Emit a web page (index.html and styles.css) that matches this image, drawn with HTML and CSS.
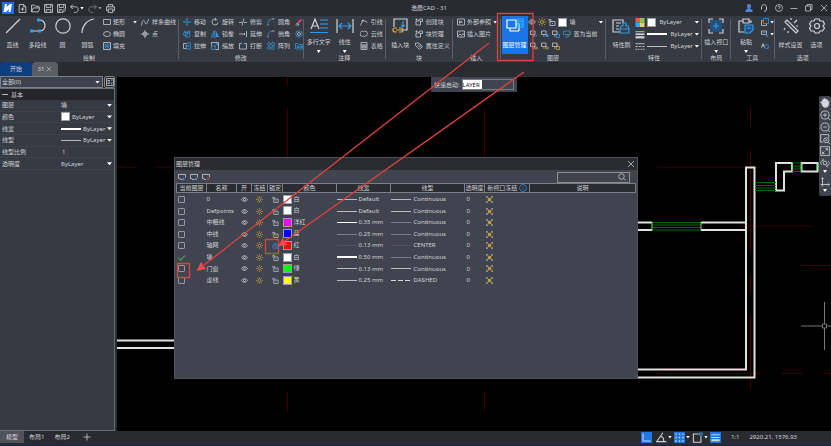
FILE: index.html
```html
<!DOCTYPE html>
<html lang="zh-CN">
<head>
<meta charset="utf-8">
<title>浩辰CAD - 31</title>
<link rel="stylesheet" href="styles.css">
</head>
<body>
<svg class="defs" aria-hidden="true">
  <symbol id="new" viewBox="0 0 16 16"><path d="M2 1h8l4 4v10H2zM10 1v4h4M5 9h6M8 6v6"/></symbol>
  <symbol id="open" viewBox="0 0 16 16"><path d="M1 14V2h5l2 2h6v3M1 14l3-7h12l-3 7z"/></symbol>
  <symbol id="save" viewBox="0 0 16 16"><path d="M1 1h14v14H1zM4 1v5h8V1M4 15v-5h8v5"/></symbol>
  <symbol id="saveas" viewBox="0 0 16 16"><path d="M8 15H1V1h14v7M4 1v5h8V1M4 15v-5h5M9 15l1-3 4-4 2 2-4 4z"/></symbol>
  <symbol id="undo" viewBox="0 0 16 16"><path d="M5 1L1 5l4 4M1 5h9c6 0 6 9 0 10H7"/></symbol>
  <symbol id="redo" viewBox="0 0 16 16"><path d="M11 1l4 4-4 4M15 5H6c-6 0-6 9 0 10h3"/></symbol>
  <symbol id="print" viewBox="0 0 16 16"><path d="M4 5V1h8v4M4 12H1V5h14v7h-3M4 9h8v6H4z"/></symbol>
  <symbol id="line" viewBox="0 0 16 16"><path d="M1 15L15 1"/></symbol>
  <symbol id="pline" viewBox="0 0 16 16"><path d="M8 2c9-1 9 11 2 11H1"/><path class="fb" d="M0 11.500h3v3H0zM8 11.500h3v3H8zM7 .5h3v3H7z"/></symbol>
  <symbol id="circle" viewBox="0 0 16 16"><circle cx="8" cy="8" r="7.200"/></symbol>
  <symbol id="arc" viewBox="0 0 16 16"><path d="M2 15C2 8 7 2 14 1"/></symbol>
  <symbol id="rect" viewBox="0 0 16 16"><path d="M1 3h14v10H1z"/></symbol>
  <symbol id="ellipse" viewBox="0 0 16 16"><ellipse cx="8" cy="8" rx="7" ry="5"/></symbol>
  <symbol id="hatch" viewBox="0 0 16 16"><path class="b" d="M3 8l5-5M3 13L13 3M8 13l5-5M3 3l10 10M8 3l5 5M3 8l5 5"/><path d="M1 1h14v14H1z"/></symbol>
  <symbol id="spline" viewBox="0 0 16 16"><path d="M1 15C3 1 7 4 8 9s5 4 7-7"/></symbol>
  <symbol id="point" viewBox="0 0 16 16"><circle cx="8" cy="8" r="4"/><path d="M8 0v16M0 8h16"/></symbol>
  <symbol id="move" viewBox="0 0 16 16"><path class="b" d="M8 1v14M1 8h14M6 3l2-2 2 2M6 13l2 2 2-2M3 6L1 8l2 2M13 6l2 2-2 2"/></symbol>
  <symbol id="copy" viewBox="0 0 16 16"><path class="b" d="M2 2l4 3 8-3-2 5"/><circle class="b" cx="9" cy="10" r="5"/><circle class="b" cx="5" cy="8" r="4"/></symbol>
  <symbol id="stretch" viewBox="0 0 16 16"><path d="M6 3H1v10h5"/><path class="b" d="M7 2h8v12H7zM4 8h8M10 6l2 2-2 2"/></symbol>
  <symbol id="rotate" viewBox="0 0 16 16"><path d="M9 2a6 6 0 1 0 5 7M9 0v5l4-2"/></symbol>
  <symbol id="mirror" viewBox="0 0 16 16"><path class="b" d="M6 2v12H0zM8 0v16"/><path class="b fb" d="M10 2v12h6z"/></symbol>
  <symbol id="scale" viewBox="0 0 16 16"><path d="M1 7V1h14v14H9"/><path class="b" d="M1 8h7v7H1zM8 8l5-5M9 3h4v4"/></symbol>
  <symbol id="trim" viewBox="0 0 16 16"><path d="M0 9h6M10 9h6M6 15L10 1"/></symbol>
  <symbol id="extend" viewBox="0 0 16 16"><path d="M0 8h12M15 2v12M10 6l2 2-2 2"/></symbol>
  <symbol id="break" viewBox="0 0 16 16"><path d="M4 3H1v11h14V3h-3"/><path class="b" d="M5 1v5M11 1v5"/></symbol>
  <symbol id="fillet" viewBox="0 0 16 16"><path d="M2 15v-3M10 2h5"/><path class="b" d="M2 12C2 6 5 2 11 2"/></symbol>
  <symbol id="array" viewBox="0 0 16 16"><circle class="b" cx="4" cy="4" r="3"/><circle class="b" cx="12" cy="4" r="3"/><circle class="b" cx="4" cy="12" r="3"/><circle class="b" cx="12" cy="12" r="3"/></symbol>
  <symbol id="erase" viewBox="0 0 16 16"><path class="pk" d="M6 10l7-7"/><path d="M1 14h7l-3-4-2 2"/></symbol>
  <symbol id="offset" viewBox="0 0 16 16"><circle class="b" cx="8" cy="8" r="6.500"/><circle cx="8" cy="8" r="3"/></symbol>
  <symbol id="explode" viewBox="0 0 16 16"><path class="b" d="M1 14V3h5l2 2h7v9zM4 8h4v3H4zM10 8h3v3h-3z"/></symbol>
  <symbol id="mtext" viewBox="0 0 18 16"><path d="M1 11L5 1l4 10M2.500 8h5"/><path class="b" d="M10 2h8M10 6h8M10 10h8M0 14.500h18"/></symbol>
  <symbol id="dim" viewBox="0 0 18 16"><path d="M1 1v14M17 1v14"/><path class="b" d="M3 8h12M6 5L3 8l3 3M12 5l3 3-3 3"/></symbol>
  <symbol id="leader" viewBox="0 0 16 16"><path d="M1 15l5-11 9 5M6 4L3 6M6 4l1 3"/></symbol>
  <symbol id="cloud" viewBox="0 0 16 16"><path d="M3 3q2-2 4 0 2-2 4 0 3-1 3 2 2 2 0 4 0 4-3 3-2 2-4 0-2 2-4 0-3 0-2-3-2-2 0-4 0-2 2-2z"/></symbol>
  <symbol id="table" viewBox="0 0 16 16"><path d="M2 1h12v14H2zM2 6h12M2 10h12M6 6v9M10 6v9"/></symbol>
  <symbol id="insblock" viewBox="0 0 16 16"><path d="M8 12h7V1H2v8"/><path class="b" d="M11 3v6M9 7l2 2 2-2"/><path class="y" d="M7 10h2q2 0 2 2t-2 2H7M5 10H3q-2 0-2 2t2 2h2M4 12h4"/></symbol>
  <symbol id="block" viewBox="0 0 16 16"><path d="M2 6h9v8H2zM7 6l2-4h6v5h-4M1 3h4M3 1v4"/></symbol>
  <symbol id="tag" viewBox="0 0 16 16"><path d="M1 2h7l7 7-6 6-8-8zM5 6l5 5M8 5l4 4"/></symbol>
  <symbol id="xref" viewBox="0 0 16 16"><path d="M1 2h14v12H1zM5 5v6M5 8h6M8 6v4"/></symbol>
  <symbol id="image" viewBox="0 0 16 16"><path d="M1 2h14v12H1zM2 12l4-4 3 3 3-4 3 4M5 5h1"/></symbol>
  <symbol id="layers" viewBox="0 0 18 16"><path d="M1 2h9v8H1zM4 10v3h9M10 6h3v7"/><path class="sky" d="M12 1h5v8h-5zM12 3.500h5M12 6h5"/></symbol>
  <symbol id="eye" viewBox="0 0 16 16"><path d="M1 8q7-9 14 0-7 9-14 0z"/><circle cx="8" cy="8" r="2.500"/></symbol>
  <symbol id="sun" viewBox="0 0 16 16"><g class="y"><circle cx="8" cy="8" r="3"/><path d="M8 0v3M8 13v3M0 8h3M13 8h3M2 2l2.500 2.500M11.500 11.500L14 14M14 2l-2.500 2.500M4.500 11.500L2 14"/></g></symbol>
  <symbol id="unlock" viewBox="0 0 16 16"><path d="M4 7h10v8H4zM6 7V3H2v4M9 10v2"/></symbol>
  <symbol id="lock" viewBox="0 0 16 16"><path class="b" d="M2 7h12v7H2zM5 7V5q3-6 6 0v2M8 9v3"/></symbol>
  <symbol id="vp" viewBox="0 0 16 16"><path d="M1 4V1h3M12 1h3v3M15 12v3h-3M4 15H1v-3"/><path class="y fy" d="M5 5h6v6H5zM3 3l10 10M13 3L3 13"/></symbol>
  <symbol id="laya" viewBox="0 0 16 16"><path d="M1 2h9v7H1zM4 12h4V9"/><path class="b" d="M9 12l2 2 4-5"/></symbol>
  <symbol id="layb" viewBox="0 0 16 16"><path d="M1 2h9v7H1zM4 12h3"/><circle class="b fb" cx="12" cy="11" r="3"/></symbol>
  <symbol id="layc" viewBox="0 0 16 16"><path d="M1 2h9v7H1zM4 12h3"/><path class="b" d="M9 9h6v6H9zM10 9V6h3"/></symbol>
  <symbol id="layd" viewBox="0 0 16 16"><path class="b" d="M1 2h13v7H1zM4 14h6"/><path class="g" d="M8 9l3 4 5-9"/></symbol>
  <symbol id="laye" viewBox="0 0 16 16"><path d="M1 2h9v7H1zM4 12h3"/><path class="y" d="M8 12q4-5 8 0-4 5-8 0z"/></symbol>
  <symbol id="layf" viewBox="0 0 16 16"><path d="M1 2h9v7H1zM4 12h3"/><path class="y" d="M9 9h6v6H9zM10 9V6h3"/></symbol>
  <symbol id="match" viewBox="0 0 18 16"><path d="M9 14H1V2h10v3M4 5h5M4 8h3M4 11h3"/><path class="b" d="M8 11h9v4H8zM8 11l1-3h2V5h3v3h2l1 3"/></symbol>
  <symbol id="viewport" viewBox="0 0 16 16"><path d="M1 5V1h4M11 1h4v4M15 11v4h-4M5 15H1v-4"/><path class="fd" stroke="none" d="M2 2h12v12H2z"/><path class="b" d="M8 5v6M5 8h6"/></symbol>
  <symbol id="paste" viewBox="0 0 16 16"><path d="M6 14H1V3h4M11 3h2v2M5 1h6v4H5z"/><path class="b fd" d="M7 7h8v5l-3 3H7z"/><path class="b" d="M9 10h4"/></symbol>
  <symbol id="copy2" viewBox="0 0 16 16"><path class="b" d="M5 1h10v10H5z"/><path d="M4 5H1v10h10v-3"/></symbol>
  <symbol id="cutsel" viewBox="0 0 16 16"><path d="M1 2h10v7H1z"/><path class="b" d="M3 5h6M10 9l5 5M15 9l-5 5"/></symbol>
  <symbol id="find" viewBox="0 0 16 16"><path d="M1 11L4 3l3 8M2 8h4"/><circle class="b" cx="11" cy="9" r="4"/><path class="b" d="M13 12l3 3"/></symbol>
  <symbol id="wand" viewBox="0 0 16 16"><path d="M2 4l2-2 11 11-2 2zM8 2V0M11 5l3-3M13 8h2M2 10l-1 2M5 13v2"/></symbol>
  <symbol id="gear" viewBox="0 0 16 16"><path d="M6 1h4l1 2 3 0 1.500 3L14 8l1.500 2-2 3-2.500 0-1 2H6l-1-2-3 0L.5 10 2 8 .5 6l2-3H5z"/><circle cx="8" cy="8" r="2.500"/></symbol>
  <symbol id="user" viewBox="0 0 16 16"><path class="u" d="M4 4q0-4 4-4t4 4q0 3-2 5l5 3v4H1v-4l5-3Q4 7 4 4z"/></symbol>
  <symbol id="headset" viewBox="0 0 16 16"><path d="M3 10V7q0-6 5-6t5 6v3q0 5-5 5M3 6v5M13 6v5"/></symbol>
  <symbol id="help" viewBox="0 0 16 16"><circle cx="8" cy="8" r="7"/><path d="M6 6q0-2 2-2t2 2-2 3v1M8 11.500v1"/></symbol>
  <symbol id="min" viewBox="0 0 16 16"><path d="M1 9h14"/></symbol>
  <symbol id="restore" viewBox="0 0 16 16"><path d="M1 4h10v10H1zM4 4V1h10v10h-3"/></symbol>
  <symbol id="close" viewBox="0 0 16 16"><path d="M2 2l12 12M14 2L2 14"/></symbol>
  <symbol id="search" viewBox="0 0 16 16"><circle cx="7" cy="7" r="5.500"/><path d="M11 11l4 4"/></symbol>
  <symbol id="info" viewBox="0 0 16 16"><g class="b"><circle cx="8" cy="8" r="7"/><path d="M8 7v5M8 4v1"/></g></symbol>
  <symbol id="qsel" viewBox="0 0 16 16"><path d="M1 1h14v14H1zM3 5h5M3 8h5M3 11h5M10 4h3"/><path class="fb" d="M9 8l6 2-3 1-1 4z"/></symbol>
  <symbol id="hand" viewBox="0 0 16 16"><path class="fw" d="M3 9L1 7l1-1 2 1V3h2V1h2v1h2v1h2v2h2v5q-1 5-5 5T4 12z"/></symbol>
  <symbol id="zin" viewBox="0 0 16 16"><circle cx="8" cy="8" r="6.500"/><path d="M8 5v6M5 8h6M13 13l3 3"/></symbol>
  <symbol id="zout" viewBox="0 0 16 16"><circle cx="8" cy="8" r="6.500"/><path d="M5 8h6M13 13l3 3"/></symbol>
  <symbol id="zwin" viewBox="0 0 16 16"><path d="M5 13H1V1h13v5"/><circle cx="10" cy="10" r="4"/><circle cx="10" cy="10" r="1"/><path d="M13 13l3 3"/></symbol>
  <symbol id="zext" viewBox="0 0 16 16"><path d="M1 1h14v14H1zM9 4h3v3M7 12H4V9M12 4L9 7M4 12l3-3"/></symbol>
  <symbol id="orbit" viewBox="0 0 16 16"><circle cx="8" cy="8" r="3"/><path d="M3 11Q-2 7 5 3M13 5q5 4-2 8M4 1l2 2-2 2M12 15l-2-2 2-2"/></symbol>
  <symbol id="ucs" viewBox="0 0 16 16"><path d="M4 15V1M2 3l2-2 2 2M1 12h14M13 10l2 2-2 2"/></symbol>
  <symbol id="lnew" viewBox="0 0 16 16"><path d="M9 13H5l-1-2H1V3h14v6"/><path class="b" d="M11 9v6M8 12h6"/></symbol>
  <symbol id="ledit" viewBox="0 0 16 16"><path d="M9 13H5l-1-2H1V3h14v6"/><path class="b fb" d="M10 10h4v4h-4z"/></symbol>
  <symbol id="ldel" viewBox="0 0 16 16"><path d="M8 13H5l-1-2H1V3h14v5"/><path class="r" d="M10 9l5 5M15 9l-5 5"/></symbol>
  <symbol id="props" viewBox="0 0 16 16"><path fill="#f25b4b" stroke="none" d="M0 0h8v8H0z"/><path fill="#7ccf55" stroke="none" d="M8 0h8v8H8z"/><path fill="#35a7f0" stroke="none" d="M0 8h8v8H0z"/><path fill="#f8cd49" stroke="none" d="M8 8h8v8H8z"/></symbol>
  <symbol id="weights" viewBox="0 0 16 16"><path d="M0 3h16"/><path stroke-width="3" d="M0 7.500h16"/><path stroke-width="4" d="M0 13h16"/></symbol>
  <symbol id="dashes" viewBox="0 0 16 16"><path d="M0 3h16M0 8h4M6 8h4M12 8h4M0 13h3M4 13h3M9 13h3M13 13h3"/></symbol>
  <symbol id="ortho" viewBox="0 0 16 16"><path fill="#1f78e6" stroke="none" d="M0 0h16v16H0z"/><path d="M3 2v11h11"/></symbol>
  <symbol id="polar" viewBox="0 0 16 16"><path d="M10 1L1 14h14M7 6q5 2 4 8"/></symbol>
  <symbol id="grid" viewBox="0 0 16 16"><path fill="#1f78e6" stroke="none" d="M0 0h16v16H0z"/><path class="fw" stroke="none" d="M2 2h2v2H2zM7 2h2v2H7zM12 2h2v2h-2zM2 7h2v2H2zM7 7h2v2H7zM12 7h2v2h-2zM2 12h2v2H2zM7 12h2v2H7zM12 12h2v2h-2z"/></symbol>
  <symbol id="osnap" viewBox="0 0 16 16"><path d="M10 3H2v12h11V6"/><circle class="b" cx="13" cy="3" r="2"/></symbol>
  <symbol id="lwt" viewBox="0 0 16 16"><path fill="#1f78e6" stroke="none" d="M0 0h16v16H0z"/><path d="M2 4h12M2 8h12"/><path stroke-width="3" d="M2 12h12"/></symbol>
  <symbol id="plus" viewBox="0 0 16 16"><path d="M8 1v14M1 8h14"/></symbol>
</svg>

<header class="titlebar">
  <svg class="logo" viewBox="0 0 12 12"><path fill="#1f6df0" stroke="none" d="M0 0h12v12H0z"/><path fill="#fff" stroke="none" d="M3 2h2L4.500 5 8 2h2L8.500 10h-2L7 7 4 10H1.500z"/></svg>
  <nav class="quick">
    <button aria-label="新建"><svg><use href="#new"/></svg></button>
    <button aria-label="打开"><svg><use href="#open"/></svg></button>
    <button aria-label="保存"><svg><use href="#save"/></svg></button>
    <button aria-label="另存为"><svg><use href="#saveas"/></svg></button>
    <button aria-label="撤销" class="drop"><svg><use href="#undo"/></svg></button>
    <button aria-label="重做" class="drop dim"><svg><use href="#redo"/></svg></button>
    <button aria-label="打印"><svg><use href="#print"/></svg></button>
  </nav>
  <h1>浩辰CAD - 31</h1>
  <nav class="window">
    <button aria-label="用户"><svg><use href="#user"/></svg></button>
    <button aria-label="客服"><svg><use href="#headset"/></svg></button>
    <button aria-label="帮助"><svg><use href="#help"/></svg></button>
    <button aria-label="最小化"><svg><use href="#min"/></svg></button>
    <button aria-label="还原"><svg><use href="#restore"/></svg></button>
    <button aria-label="关闭"><svg><use href="#close"/></svg></button>
  </nav>
</header>

<div class="ribbon">
  <section class="group g-draw">
    <div class="tools">
      <button class="big"><svg><use href="#line"/></svg>直线</button>
      <button class="big"><svg><use href="#pline"/></svg>多段线</button>
      <button class="big"><svg><use href="#circle"/></svg>圆</button>
      <button class="big"><svg><use href="#arc"/></svg>圆弧</button>
      <div class="stack wide">
        <button class="spread"><svg><use href="#rect"/></svg>矩形<i class="caret"></i></button>
        <button><svg><use href="#ellipse"/></svg>椭圆</button>
        <button><svg><use href="#hatch"/></svg>填充</button>
      </div>
      <div class="stack">
        <button><svg><use href="#spline"/></svg>样条曲线</button>
        <button><svg><use href="#point"/></svg>点</button>
      </div>
    </div>
    <h2>绘制</h2>
  </section>
  <section class="group g-modify">
    <div class="tools even">
      <div class="stack">
        <button><svg><use href="#move"/></svg>移动</button>
        <button><svg><use href="#copy"/></svg>复制</button>
        <button><svg><use href="#stretch"/></svg>拉伸</button>
      </div>
      <div class="stack">
        <button><svg><use href="#rotate"/></svg>旋转</button>
        <button><svg><use href="#mirror"/></svg>镜像</button>
        <button><svg><use href="#scale"/></svg>缩放</button>
      </div>
      <div class="stack">
        <button><svg><use href="#trim"/></svg>修剪</button>
        <button><svg><use href="#extend"/></svg>延伸</button>
        <button><svg><use href="#break"/></svg>打断</button>
      </div>
      <div class="stack">
        <button><svg><use href="#fillet"/></svg>圆角</button>
        <button><svg><use href="#fillet"/></svg>倒角</button>
        <button><svg><use href="#array"/></svg>阵列</button>
      </div>
      <div class="stack">
        <button aria-label="删除"><svg><use href="#erase"/></svg></button>
        <button aria-label="偏移"><svg><use href="#offset"/></svg></button>
        <button aria-label="分解"><svg><use href="#explode"/></svg></button>
      </div>
    </div>
    <h2>修改</h2>
  </section>
  <section class="group g-note">
    <div class="tools">
      <button class="big more"><svg><use href="#mtext"/></svg>多行文字<i class="caret"></i></button>
      <button class="big more"><svg><use href="#dim"/></svg>线性<i class="caret"></i></button>
      <div class="stack">
        <button><svg><use href="#leader"/></svg>引线</button>
        <button><svg><use href="#cloud"/></svg>云线</button>
        <button><svg><use href="#table"/></svg>表格</button>
      </div>
    </div>
    <h2>注释</h2>
  </section>
  <section class="group g-block">
    <div class="tools">
      <button class="big"><svg><use href="#insblock"/></svg>插入块</button>
      <div class="stack">
        <button><svg><use href="#block"/></svg>创建块</button>
        <button><svg><use href="#block"/></svg>块管理</button>
        <button><svg><use href="#tag"/></svg>属性定义</button>
      </div>
    </div>
    <h2>块</h2>
  </section>
  <section class="group g-insert">
    <div class="tools">
      <div class="stack">
        <button><svg><use href="#xref"/></svg>外部参照<i class="caret"></i></button>
        <button><svg><use href="#image"/></svg>插入图片</button>
      </div>
    </div>
    <h2>插入</h2>
  </section>
  <section class="group g-layer">
    <div class="tools">
      <button class="big active"><svg><use href="#layers"/></svg>图层管理</button>
      <div class="stack grow">
        <div class="row lead">
          <svg><use href="#eye"/></svg><svg><use href="#sun"/></svg><svg><use href="#unlock"/></svg><i class="swatch white"></i>
          <label class="pick"><select aria-label="图层"><option>墙</option></select></label>
        </div>
        <div class="row">
          <button aria-label="匹配图层"><svg><use href="#laya"/></svg></button>
          <button aria-label="冻结图层"><svg><use href="#layb"/></svg></button>
          <button aria-label="锁定图层"><svg><use href="#layc"/></svg></button>
          <button><svg><use href="#layd"/></svg>置为当前</button>
        </div>
        <div class="row">
          <button aria-label="显示图层"><svg><use href="#laye"/></svg></button>
          <button aria-label="解冻图层"><svg><use href="#laye"/></svg></button>
          <button aria-label="解锁图层"><svg><use href="#layf"/></svg></button>
        </div>
      </div>
    </div>
    <h2>图层</h2>
  </section>
  <section class="group g-props">
    <div class="tools">
      <button class="big"><svg><use href="#match"/></svg>特性刷</button>
      <div class="stack grow">
        <div class="row lead"><svg class="mid"><use href="#props"/></svg><i class="swatch white"></i><label class="pick"><select aria-label="颜色"><option>ByLayer</option></select></label></div>
        <div class="row lead"><svg class="mid"><use href="#weights"/></svg><i class="rule thick"></i><label class="pick"><select aria-label="线宽"><option>ByLayer</option></select></label></div>
        <div class="row lead"><svg class="mid"><use href="#dashes"/></svg><i class="rule"></i><label class="pick"><select aria-label="线型"><option>ByLayer</option></select></label></div>
      </div>
    </div>
    <h2>特性</h2>
  </section>
  <section class="group g-layout">
    <div class="tools">
      <button class="big more"><svg><use href="#viewport"/></svg>插入视口<i class="caret"></i></button>
    </div>
    <h2>布局</h2>
  </section>
  <section class="group g-tools">
    <div class="tools">
      <button class="big more"><svg><use href="#paste"/></svg>粘贴<i class="caret"></i></button>
      <div class="stack tight">
        <button aria-label="复制"><svg><use href="#copy2"/></svg><i class="caret"></i></button>
        <button aria-label="选择"><svg><use href="#cutsel"/></svg><i class="caret"></i></button>
        <button aria-label="查找"><svg><use href="#find"/></svg></button>
      </div>
    </div>
    <h2>工具</h2>
  </section>
  <section class="group g-options">
    <div class="tools">
      <button class="big"><svg><use href="#wand"/></svg>样式设置</button>
      <button class="big"><svg><use href="#gear"/></svg>选项</button>
    </div>
    <h2>选项</h2>
  </section>
</div>

<nav class="doctabs">
  <a class="home" href="#start">开始</a>
  <a href="#31">31 <svg><use href="#close"/></svg></a>
</nav>

<main>
  <aside class="panel">
    <div class="selector">
      <label class="pick"><select aria-label="选择对象"><option>全部(0)</option></select></label>
      <button aria-label="快速选择"><svg><use href="#qsel"/></svg></button>
    </div>
    <div class="props">
      <h3><i></i>基本</h3>
      <div class="fields">
        <div><label for="p1">图层</label><span class="pick"><select id="p1"><option>墙</option></select></span></div>
        <div><label for="p2">颜色</label><span class="pick"><i class="swatch white"></i><select id="p2"><option>ByLayer</option></select></span></div>
        <div><label for="p3">线宽</label><span class="pick"><i class="rule thick"></i><select id="p3"><option>ByLayer</option></select></span></div>
        <div><label for="p4">线型</label><span class="pick"><i class="rule"></i><select id="p4"><option>ByLayer</option></select></span></div>
        <div><label for="p5">线型比例</label><input id="p5" value="1"></div>
        <div><label for="p6">透明度</label><span class="pick"><select id="p6"><option>ByLayer</option></select></span></div>
      </div>
    </div>
  </aside>

  <div class="canvas">
    <svg class="drawing" viewBox="117 77 714 354" preserveAspectRatio="none">
      <g class="axis">
        <path d="M117 167h19M157 167h20M657 167h104M740 226h72M801 265.500h30M657 373.500h104M782 373.500h20M824 373.500h7"/>
        <path d="M287.500 77v9M287.500 108v50M484.500 77v9M484.500 108v50M750.500 107v20M750.500 149v103M750.500 274v20M750.500 315v75M287.500 392v20M484.500 392v20"/>
      </g>
      <g class="wall">
        <path d="M638 369.500H746V167.500H754.500V377.500H638M638 222.500H652M638 230H652M701 222.500H746M701 230H746"/>
        <path d="M776 163h16v8.500h-8V190.500h-8zM801.500 163h16v8.500h-16zM117 340.500h57M117 348h57"/>
      </g>
      <path class="glass" d="M652 222.500h49M652 225h49M652 227.500h49M652 230h49M755 182.500h21M755 185.500h21M755 188h21M755 190.500h21M792 163h9M792 166h9M792 169h9M792 171.500h9"/>
      <path class="glass-end" d="M652 222v8.500M701 222v8.500M792 163v8.500M801.500 163v8.500M818 163v8.500"/>
      <path class="cursor" d="M801 326h22M827 326h4M824.500 302v22M824.500 328v22M822.500 324h4v4h-4z"/>
    </svg>

    <div class="command">
      <label for="cmd">快速启动:</label><input id="cmd" value="LAYER">
    </div>

    <div class="navbar">
      <button aria-label="平移"><svg><use href="#hand"/></svg></button>
      <button aria-label="放大"><svg><use href="#zin"/></svg></button>
      <button aria-label="缩小"><svg><use href="#zout"/></svg></button>
      <button aria-label="窗口缩放"><svg><use href="#zwin"/></svg></button>
      <button aria-label="全图"><svg><use href="#zext"/></svg></button>
      <button aria-label="动态观察" class="more"><svg><use href="#orbit"/></svg><i class="caret"></i></button>
      <button aria-label="坐标系" class="more"><svg><use href="#ucs"/></svg><i class="caret"></i></button>
    </div>

    <section class="dialog" role="dialog" aria-label="图层管理">
      <header><h2>图层管理</h2><button aria-label="关闭"><svg><use href="#close"/></svg></button></header>
      <div class="bar">
        <button aria-label="新建图层"><svg><use href="#lnew"/></svg></button>
        <button aria-label="编辑图层"><svg><use href="#ledit"/></svg></button>
        <button aria-label="删除图层"><svg><use href="#ldel"/></svg></button>
        <label class="find"><input type="search" aria-label="搜索"><svg><use href="#search"/></svg></label>
      </div>
      <table>
        <colgroup><col class="c30"><col class="c30"><col class="c15"><col class="c16"><col class="c15"><col class="c54"><col class="c54"><col class="c74"><col class="c20"><col class="c45"><col></colgroup>
        <thead><tr><th>当前图层</th><th>名称</th><th>开</th><th>冻结</th><th>锁定</th><th>颜色</th><th>线宽</th><th>线型</th><th>透明度</th><th>新视口冻结 <svg><use href="#info"/></svg></th><th>说明</th></tr></thead>
        <tbody>
          <tr><td><input type="checkbox" aria-label="0"></td><td>0</td><td><svg><use href="#eye"/></svg></td><td><svg><use href="#sun"/></svg></td><td><svg><use href="#unlock"/></svg></td><td><i class="swatch white"></i>白</td><td><i class="rule"></i>Default</td><td><i class="rule"></i>Continuous</td><td>0</td><td><svg><use href="#vp"/></svg></td><td></td></tr>
          <tr><td><input type="checkbox" aria-label="Defpoints"></td><td>Defpoints</td><td><svg><use href="#eye"/></svg></td><td><svg><use href="#sun"/></svg></td><td><svg><use href="#unlock"/></svg></td><td><i class="swatch white"></i>白</td><td><i class="rule"></i>Default</td><td><i class="rule"></i>Continuous</td><td>0</td><td><svg><use href="#vp"/></svg></td><td></td></tr>
          <tr><td><input type="checkbox" aria-label="中粗线"></td><td>中粗线</td><td><svg><use href="#eye"/></svg></td><td><svg><use href="#sun"/></svg></td><td><svg><use href="#unlock"/></svg></td><td><i class="swatch magenta"></i>洋红</td><td><i class="rule bold"></i>0.35 mm</td><td><i class="rule faint"></i>Continuous</td><td>0</td><td><svg><use href="#vp"/></svg></td><td></td></tr>
          <tr><td><input type="checkbox" aria-label="中线"></td><td>中线</td><td><svg><use href="#eye"/></svg></td><td><svg><use href="#sun"/></svg></td><td><svg><use href="#unlock"/></svg></td><td><i class="swatch blue"></i>蓝</td><td><i class="rule faint"></i>0.25 mm</td><td><i class="rule faint"></i>Continuous</td><td>0</td><td><svg><use href="#vp"/></svg></td><td></td></tr>
          <tr><td><input type="checkbox" aria-label="轴网"></td><td>轴网</td><td><svg><use href="#eye"/></svg></td><td><svg><use href="#sun"/></svg></td><td><svg><use href="#lock"/></svg></td><td><i class="swatch red"></i>红</td><td><i class="rule ghost"></i>0.13 mm</td><td><i class="rule ghost"></i>CENTER</td><td>0</td><td><svg><use href="#vp"/></svg></td><td></td></tr>
          <tr><td><input type="checkbox" aria-label="墙" checked></td><td>墙</td><td><svg><use href="#eye"/></svg></td><td><svg><use href="#sun"/></svg></td><td><svg><use href="#unlock"/></svg></td><td><i class="swatch white"></i>白</td><td><i class="rule thick"></i>0.50 mm</td><td><i class="rule faint"></i>Continuous</td><td>0</td><td><svg><use href="#vp"/></svg></td><td></td></tr>
          <tr><td><input type="checkbox" aria-label="门窗"></td><td>门窗</td><td><svg><use href="#eye"/></svg></td><td><svg><use href="#sun"/></svg></td><td><svg><use href="#unlock"/></svg></td><td><i class="swatch green"></i>绿</td><td><i class="rule"></i>0.13 mm</td><td><i class="rule"></i>Continuous</td><td>0</td><td><svg><use href="#vp"/></svg></td><td></td></tr>
          <tr><td><input type="checkbox" aria-label="虚线"></td><td>虚线</td><td><svg><use href="#eye"/></svg></td><td><svg><use href="#sun"/></svg></td><td><svg><use href="#unlock"/></svg></td><td><i class="swatch yellow"></i>黄</td><td><i class="rule"></i>0.25 mm</td><td><i class="rule dashed"></i>DASHED</td><td>0</td><td><svg><use href="#vp"/></svg></td><td></td></tr>
        </tbody>
      </table>
    </section>
  </div>
</main>

<footer class="status">
  <nav><a class="on" href="#model">模型</a><a href="#l1">布局1</a><a href="#l2">布局2</a><button aria-label="新建布局"><svg><use href="#plus"/></svg></button></nav>
  <div class="modes">
    <button aria-label="正交" class="first"><svg><use href="#ortho"/></svg></button>
    <button aria-label="极轴"><svg><use href="#polar"/></svg><i class="caret"></i></button>
    <button aria-label="栅格"><svg><use href="#grid"/></svg><i class="caret"></i></button>
    <button aria-label="对象捕捉"><svg><use href="#osnap"/></svg><i class="caret"></i></button>
    <button aria-label="线宽"><svg><use href="#lwt"/></svg></button>
    <span class="ratio">1:1</span>
    <span class="coords">2920.21, 1576.93</span>
  </div>
</footer>

<svg class="marks" viewBox="0 0 831 446" aria-hidden="true">
  <path class="stroke" d="M489 43L204 265M524 72L285 241M497.500 13.500h35.500v47h-35.500zM265.500 239.500h13v14h-13zM177.500 263.500h12v14h-12z"/>
  <path class="tip" d="M196.500 271l4.500-9 5 7zM278 246.500l4.500-8.500 5 7z"/>
</svg>
</body>
</html>
```
FILE: styles.css
```css
* { box-sizing: border-box; }
body {
  margin: 0;
  height: 100vh;
  display: flex;
  flex-direction: column;
  position: relative;
  overflow: hidden;
  background: #2a2b30;
  color: #d0d2d6;
  font: 6px/8px "Noto Sans", "Noto Sans CJK SC", sans-serif;
}
button, input, select {
  font: inherit;
  color: inherit;
  background: none;
  border: 0;
  border-radius: 0;
  padding: 0;
  margin: 0;
  min-width: 0;
  appearance: none;
  outline: 0;
}
button { display: flex; align-items: center; white-space: nowrap; }
a { color: inherit; text-decoration: none; }
h1, h2, h3 { margin: 0; font: inherit; }
svg { fill: none; stroke: currentColor; stroke-width: 1.5; display: block; flex: none; width: 8px; height: 8px; }
.defs { position: absolute; width: 0; height: 0; }
.b { stroke: #2f9bea; }
.y { stroke: #d9a93c; }
.g { stroke: #3fae5c; }
.r { stroke: #e2504a; }
.pk { stroke: #d23a78; stroke-width: 4; }
.sky { stroke: #35b4ff; }
.fb { fill: #2f9bea; stroke: none; }
.fy { fill: #a08440; }
.fd { fill: #23507c; }
.fw { fill: #d6d8dc; }
.u { fill: #4a86e0; stroke: none; }

.caret {
  width: 4px;
  height: 3px;
  flex: none;
  background: #fff;
  clip-path: polygon(0 0, 100% 0, 50% 100%);
}
.swatch { width: 9px; height: 9px; flex: none; border: 1px solid #9a9da3; }
.white { background: #fff; }
.magenta { background: #f0f; }
.blue { background: #00f; }
.red { background: #f00; }
.green { background: #0f0; }
.yellow { background: #ff0; }
.rule { width: 20px; height: 1px; flex: none; background: #b9bbc0; }
.rule.thick { height: 2px; background: #fff; }
.rule.bold { background: #fff; }
.rule.faint { background: #7b7f87; }
.rule.ghost { background: #50545d; }
.rule.dashed { background: repeating-linear-gradient(90deg, #d6d8dc 0 5px, transparent 5px 7px); }
.pick { display: flex; align-items: center; flex: 1; min-width: 0; position: relative; }
.pick select { flex: 1; width: 100%; height: 8px; }
.pick::after {
  content: "";
  position: absolute;
  right: 2px;
  width: 5px;
  height: 3px;
  background: #fff;
  clip-path: polygon(0 0, 100% 0, 50% 100%);
  pointer-events: none;
}

.titlebar { height: 16px; flex: none; display: grid; grid-template-columns: 1fr auto 1fr; align-items: center; position: relative; padding: 0 3px 0 2px; }
.titlebar { grid-template-columns: 12px 1fr auto 1fr; }
.titlebar h1 { padding-left: 16px; }
.titlebar .logo { width: 12px; height: 12px; }
.quick { display: flex; gap: 4px; padding-left: 4px; }
.quick svg { width: 9px; height: 9px; }
.drop { gap: 1px; }
.drop::after { content: ""; width: 4px; height: 3px; background: #fff; clip-path: polygon(0 0, 100% 0, 50% 100%); }
.dim { opacity: .5; }
.window { display: flex; gap: 7px; justify-content: flex-end; }

.ribbon { flex: none; height: 46px; display: flex; background: #363a43; }
.group { min-width: 0; display: flex; flex-direction: column; align-items: stretch; }
.group + .group { border-left: 1px solid #555963; border-image: linear-gradient(transparent 8%, #5b5f68 8% 92%, transparent 92%) 1; }
.group h2 { text-align: center; }
.g-draw { flex: 180 1 0; }
.g-modify { flex: 125 1 0; }
.g-note { flex: 82 1 0; }
.g-block { flex: 67 1 0; }
.g-insert { flex: 47 1 0; }
.g-layer { flex: 106 1 0; }
.g-props { flex: 96 1 0; }
.g-layout { flex: 28 1 0; }
.g-tools { flex: 43 1 0; }
.g-options { flex: 57 1 0; }
.tools { height: 38px; display: flex; }
.big { width: 25px; flex: none; flex-direction: column; justify-content: flex-start; padding-top: 2px; gap: 7px; }
.big svg { width: 18px; height: 16px; stroke-width: 1.2; }
.big.more { gap: 4px; }
.stack { display: grid; grid-template-rows: repeat(3, 12px); align-items: center; }
.stack button { gap: 3px; }
.wide { width: 41px; padding-left: 3px; }
.wide button { gap: 2px; }
.spread .caret { margin-left: 6px; }
.even { padding-left: 4px; display: grid; grid-template-columns: repeat(4, 28px) 8px; }
.even .stack button { width: 100%; }
.g-note .tools { padding-left: 2px; }
.g-note .big { width: 26px; }
.g-note .stack { padding-left: 2px; }
.g-block .tools { padding-left: 2px; }
.g-block .stack { padding-left: 2px; }
.g-insert .tools { padding-left: 4px; }
.g-insert .stack button { gap: 2px; }
.g-layer .tools { padding-left: 1px; }
.active { background: #1c73e4; color: #fff; width: 26px; }
.grow { flex: 1; }
.row { display: flex; align-items: center; gap: 3px; padding-left: 2px; }
.row.lead { gap: 2px; padding-left: 0; }
.row .pick { padding-left: 1px; }
.mid { width: 10px; height: 9px; }
.g-props .tools { padding-left: 1px; }
.g-props .big { width: 28px; }
.g-layout .tools { justify-content: center; }
.g-tools .big { width: 30px; }
.tight button { gap: 1px; }
.g-options .big { width: 28px; padding-left: 4px; }
.g-options .big + .big { padding-left: 0; }

.doctabs { flex: none; height: 14px; display: flex; }
.doctabs a { width: 26px; display: flex; align-items: center; justify-content: center; gap: 2px; background: #5a5d64; border-radius: 4px 4px 0 0; }
.doctabs .home { width: 32px; background: #0d3e7d; }
.doctabs svg { width: 6px; height: 6px; }

main { flex: 1; min-height: 0; display: flex; }
.panel { width: 117px; flex: none; display: flex; flex-direction: column; padding-right: 2px; }
.selector { display: flex; gap: 1px; height: 12px; flex: none; }
.selector .pick { border: 1px solid #7b7f87; background: #3d434e; padding-left: 1px; }
.selector button { width: 11px; justify-content: center; border: 1px solid #7b7f87; border-radius: 2px; }
.props { flex: 1; background: #363a43; border: 1px solid #6a6e76; border-left: 0; }
.props h3 { height: 11px; display: flex; align-items: center; gap: 3px; padding-left: 2px; background: #25262a; }
.props h3 i { width: 6px; height: 1px; background: #b9bbc0; }
.fields { height: 70px; display: grid; grid-template-rows: repeat(6, 1fr); }
.fields > div { display: grid; grid-template-columns: 59px 1fr; align-items: center; padding-left: 2px; border-bottom: 1px solid #3d414a; }
.fields .pick { gap: 2px; }
.fields input { padding-left: 1px; width: 100%; }

.canvas { flex: 1; min-width: 0; margin-top: 1px; background: #000; position: relative; }
.drawing { width: 100%; height: 100%; stroke-width: 1; }
.axis { stroke: #3c0000; }
.wall { stroke: #e0e0e0; stroke-width: 2; }
.glass { stroke: #006a00; }
.glass-end { stroke: #5ce65c; }
.cursor { stroke: #777; }

.command { position: absolute; left: 314px; top: 0; height: 15px; width: 86px; display: flex; align-items: center; gap: 2px; padding: 0 3px; background: #40444e; white-space: nowrap; }
.command input { flex: 1; height: 11px; border: 1px solid #7b7f87; color: #111; background: linear-gradient(#fff, #fff) 0 0 / 19px 100% no-repeat; }

.navbar { position: absolute; right: 0; top: 19px; width: 12px; padding: 2px 0; display: flex; flex-direction: column; align-items: center; gap: 2px; background: #40444e; border-radius: 2px; }
.navbar svg { width: 10px; height: 10px; stroke-width: 1.3; }
.navbar .more { flex-direction: column; gap: 2px; padding-bottom: 2px; }

.dialog { position: absolute; left: 57px; top: 80px; width: 464px; height: 222px; background: #40444e; border: 1px solid #4d515a; }
.dialog header { height: 12px; display: flex; justify-content: space-between; align-items: center; padding: 0 2px 0 1px; background: #2b2c31; }
.bar { height: 13px; display: flex; align-items: center; gap: 4px; padding: 1px 7px 0 3px; }
.find { margin-left: auto; width: 73px; height: 11px; display: flex; align-items: center; padding-right: 3px; border: 1px solid #8d9097; }
.find input { flex: 1; }
table { width: 460px; height: 103px; margin-left: 1px; table-layout: fixed; border-collapse: collapse; }
.c30 { width: 30px; }
.c15 { width: 15px; }
.c16 { width: 16px; }
.c54 { width: 54px; }
.c74 { width: 74px; }
.c20 { width: 20px; }
.c45 { width: 45px; }
th { height: 9px; padding: 0; font-weight: 400; background: #2b2c31; border: 1px solid #7b7f87; white-space: nowrap; }
th svg { display: inline-block; vertical-align: middle; }
td { padding: 0; white-space: nowrap; }
td > * { display: inline-block; vertical-align: middle; }
td:nth-child(1) { padding-left: 1px; }
td:nth-child(3), td:nth-child(4), td:nth-child(5) { text-align: center; }
td:nth-child(9) { padding-left: 2px; }
td:nth-child(10) { padding-left: 1px; }
td .swatch, td .rule { margin-right: 2px; }
td:nth-child(8) .rule { margin-right: 3px; }
tbody svg { width: 7px; height: 7px; }
input[type="checkbox"] { width: 7px; height: 7px; border: 1px solid #94979e; border-radius: 1px; }
input[type="checkbox"]:checked { width: 7px; height: 4px; border: 0 solid #3fae5c; border-width: 0 0 1px 1px; border-radius: 0; transform: rotate(-45deg); }

.status { flex: none; height: 15px; display: flex; justify-content: space-between; padding-bottom: 2px; border-bottom: 1px solid #14294a; background: #2a2b30; }
.status nav, .modes, .modes button { display: flex; align-items: center; }
.status a { padding: 0 5px; line-height: 12px; }
.status .on { padding: 0 6px; background: #50535b; }
.status nav button { margin-left: 8px; }
.modes { gap: 2px; padding-right: 34px; }
.modes .first { margin-right: 2px; }
.modes button { gap: 1px; }
.modes svg { width: 11px; height: 11px; }
.ratio { padding: 0 8px; }

.marks { position: absolute; inset: 0; width: 100%; height: 100%; pointer-events: none; }
.marks .stroke { stroke: #e0403f; stroke-width: 1.3; }
.marks .tip { fill: #f04a48; stroke: none; }
```
